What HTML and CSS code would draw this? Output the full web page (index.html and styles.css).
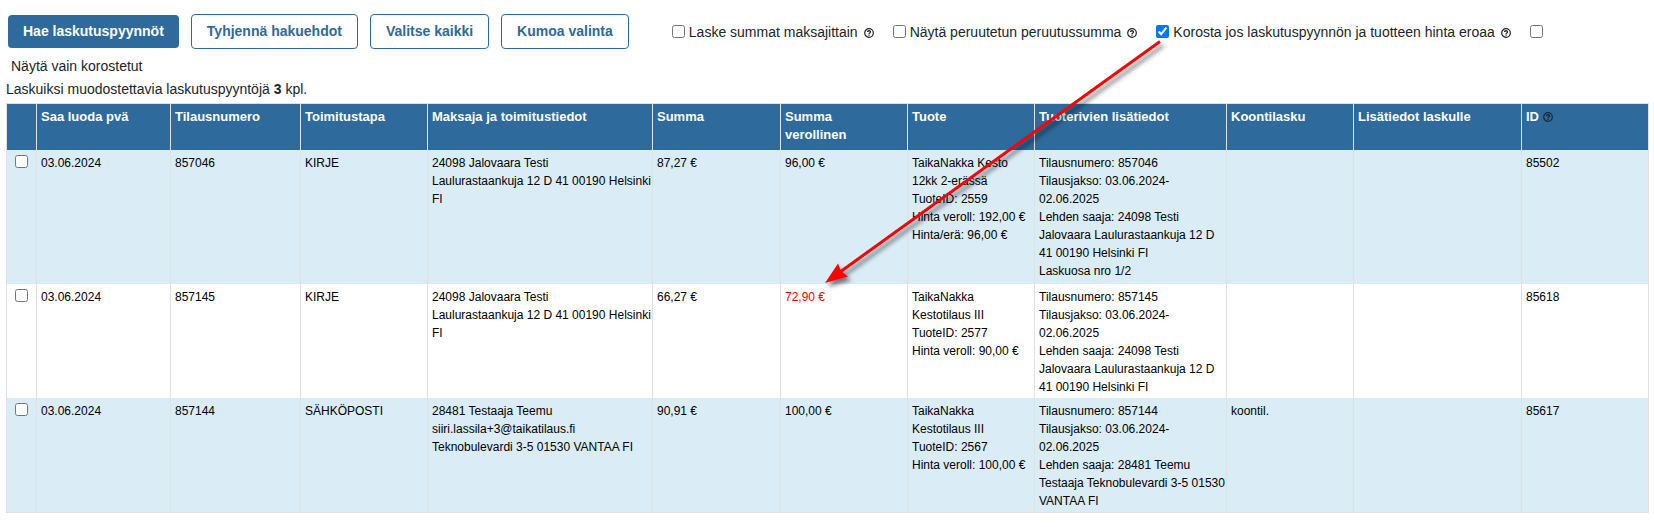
FILE: index.html
```html
<!DOCTYPE html>
<html lang="fi">
<head>
<meta charset="utf-8">
<title>Laskutuspyynnöt</title>
<link rel="stylesheet" href="styles.css">
</head>
<body>
<svg class="symbols" aria-hidden="true">
  <symbol id="help" viewBox="0 0 10 10">
    <circle cx="5" cy="5" r="4.3" fill="none" stroke="currentColor" stroke-width="1.2"/>
    <path d="M3.5 4.1C3.5 2.3 6.5 2.3 6.5 4C6.5 5 5 5 5 6" fill="none" stroke="currentColor" stroke-width="1.3"/>
    <path d="M4.4 6.6h1.3v1.2H4.4z" fill="currentColor"/>
  </symbol>
</svg>
<form class="page">
  <div class="toolbar">
    <div class="actions">
      <button type="button" class="btn btn-primary">Hae laskutuspyynnöt</button>
      <button type="button" class="btn btn-outline">Tyhjennä hakuehdot</button>
      <button type="button" class="btn btn-outline">Valitse kaikki</button>
      <button type="button" class="btn btn-outline">Kumoa valinta</button>
    </div>
    <div class="options">
      <label class="option"><input type="checkbox" class="check"><span>Laske summat maksajittain</span><svg class="help"><use href="#help"/></svg></label>
      <label class="option"><input type="checkbox" class="check"><span>Näytä peruutetun peruutussumma</span><svg class="help"><use href="#help"/></svg></label>
      <label class="option"><input type="checkbox" class="check" checked><span>Korosta jos laskutuspyynnön ja tuotteen hinta eroaa</span><svg class="help"><use href="#help"/></svg></label>
      <input type="checkbox" class="check" id="only-highlighted">
    </div>
  </div>
  <label class="wrapped-label" for="only-highlighted">Näytä vain korostetut</label>
  <p class="summary">Laskuiksi muodostettavia laskutuspyyntöjä <b>3</b> kpl.</p>
  <table class="requests">
    <colgroup>
      <col class="c-check"><col class="c-date"><col class="c-order"><col class="c-method"><col class="c-payer"><col class="c-sum"><col class="c-gross"><col class="c-product"><col class="c-details"><col class="c-batch"><col class="c-notes"><col class="c-id">
    </colgroup>
    <thead>
      <tr>
        <th></th><th>Saa luoda pvä</th><th>Tilausnumero</th><th>Toimitustapa</th><th>Maksaja ja toimitustiedot</th><th>Summa</th><th>Summa<br>verollinen</th><th>Tuote</th><th>Tuoterivien lisätiedot</th><th>Koontilasku</th><th>Lisätiedot laskulle</th><th>ID <svg class="help help-dark"><use href="#help"/></svg></th>
      </tr>
    </thead>
    <tbody>
      <tr>
        <td class="pick"><input type="checkbox" class="check" aria-label="Valitse 85502"></td>
        <td>03.06.2024</td><td>857046</td><td>KIRJE</td>
        <td>24098 Jalovaara Testi<br>Laulurastaankuja 12 D 41 00190 Helsinki FI</td>
        <td>87,27 €</td><td>96,00 €</td>
        <td>TaikaNakka Kesto 12kk 2-erässä<br>TuoteID: 2559<br>Hinta veroll: 192,00 €<br>Hinta/erä: 96,00 €</td>
        <td>Tilausnumero: 857046<br>Tilausjakso: 03.06.2024-02.06.2025<br>Lehden saaja: 24098 Testi Jalovaara Laulurastaankuja 12 D 41 00190 Helsinki FI<div class="part">Laskuosa nro 1/2</div></td>
        <td></td><td></td><td>85502</td>
      </tr>
      <tr>
        <td class="pick"><input type="checkbox" class="check" aria-label="Valitse 85618"></td>
        <td>03.06.2024</td><td>857145</td><td>KIRJE</td>
        <td>24098 Jalovaara Testi<br>Laulurastaankuja 12 D 41 00190 Helsinki FI</td>
        <td>66,27 €</td><td class="mismatch">72,90 €</td>
        <td>TaikaNakka Kestotilaus III<br>TuoteID: 2577<br>Hinta veroll: 90,00 €</td>
        <td>Tilausnumero: 857145<br>Tilausjakso: 03.06.2024-02.06.2025<br>Lehden saaja: 24098 Testi Jalovaara Laulurastaankuja 12 D 41 00190 Helsinki FI</td>
        <td></td><td></td><td>85618</td>
      </tr>
      <tr>
        <td class="pick"><input type="checkbox" class="check" aria-label="Valitse 85617"></td>
        <td>03.06.2024</td><td>857144</td><td>SÄHKÖPOSTI</td>
        <td>28481 Testaaja Teemu<br>siiri.lassila+3@taikatilaus.fi<br>Teknobulevardi 3-5 01530 VANTAA FI</td>
        <td>90,91 €</td><td>100,00 €</td>
        <td>TaikaNakka Kestotilaus III<br>TuoteID: 2567<br>Hinta veroll: 100,00 €</td>
        <td>Tilausnumero: 857144<br>Tilausjakso: 03.06.2024-02.06.2025<br>Lehden saaja: 28481 Teemu Testaaja Teknobulevardi 3-5 01530 VANTAA FI</td>
        <td>koontil.</td><td></td><td>85617</td>
      </tr>
    </tbody>
  </table>
</form>
<svg class="pointer" viewBox="0 0 360 260" aria-hidden="true">
  <path d="M340 11.5L20 242" stroke="#f00" stroke-width="3" fill="none"/>
  <path d="M5 253L18 233.500L21 241L28 246.500Z" fill="#f00"/>
</svg>
</body>
</html>
```
FILE: styles.css
```css
* { box-sizing: border-box; }

body {
  position: relative;
  margin: 0;
  background: #fff;
  color: #212529;
  font: 14px/22px "Liberation Sans", Arial, sans-serif;
}

.symbols { display: none; }

.page { padding: 14px 6px; }

.toolbar {
  display: flex;
  align-items: center;
  gap: 43px;
  padding-left: 2px;
}

.actions {
  display: flex;
  align-items: center;
  gap: 12px;
}

.btn {
  padding: 0 15px;
  border-radius: 4px;
  font: bold 14px/33px "Liberation Sans", Arial, sans-serif;
  white-space: nowrap;
}

.btn-primary {
  border: 0;
  background: #2e6a9c;
  color: #fff;
}

.btn-outline {
  border: 1px solid #2e6a9c;
  background: #fff;
  color: #2e6a9c;
}

.options {
  display: flex;
  align-items: center;
  gap: 19px;
}

.option {
  display: flex;
  align-items: center;
  gap: 4px;
  white-space: nowrap;
}

.check {
  width: 13px;
  height: 13px;
  margin: 0;
}

.help {
  width: 10px;
  height: 10px;
  vertical-align: -1px;
}

.option .help { margin: 2px 0 0 2px; }

.help-dark { color: #1b2730; }

.wrapped-label {
  display: block;
  padding: 6px 5px 0;
}

.summary { margin: 1px 0 3px; }

.requests {
  width: 100%;
  table-layout: fixed;
  border-collapse: collapse;
  border: 1px solid #dee2e6;
  color: #000;
  font-size: 12px;
  line-height: 18px;
}

.c-check { width: 30px; }
.c-date { width: 134px; }
.c-order { width: 130px; }
.c-method { width: 127px; }
.c-payer { width: 225px; }
.c-sum { width: 128px; }
.c-gross { width: 127px; }
.c-product { width: 127px; }
.c-details { width: 192px; }
.c-batch { width: 127px; }
.c-notes { width: 168px; }
.c-id { width: 127px; }

.requests th {
  padding: 4px 0 6px 4px;
  border-right: 1px solid #dee2e6;
  background: #2e6a9c;
  color: #fff;
  font-size: 13px;
  text-align: left;
  vertical-align: top;
}

.requests td {
  padding: 4px 0 2px 4px;
  border-right: 1px solid #dee2e6;
  vertical-align: top;
}

.requests tbody tr:nth-child(odd) { background: #daecf6; }

.requests .pick {
  padding: 5px 0 0;
  line-height: 13px;
  text-align: center;
}

.requests .mismatch { color: #f00; }

.part { padding-bottom: 2px; }

.pointer {
  position: absolute;
  left: 820px;
  top: 30px;
  width: 360px;
  height: 260px;
  pointer-events: none;
  filter: drop-shadow(3px 4px 2px rgba(0, 0, 0, 0.5));
}
```
